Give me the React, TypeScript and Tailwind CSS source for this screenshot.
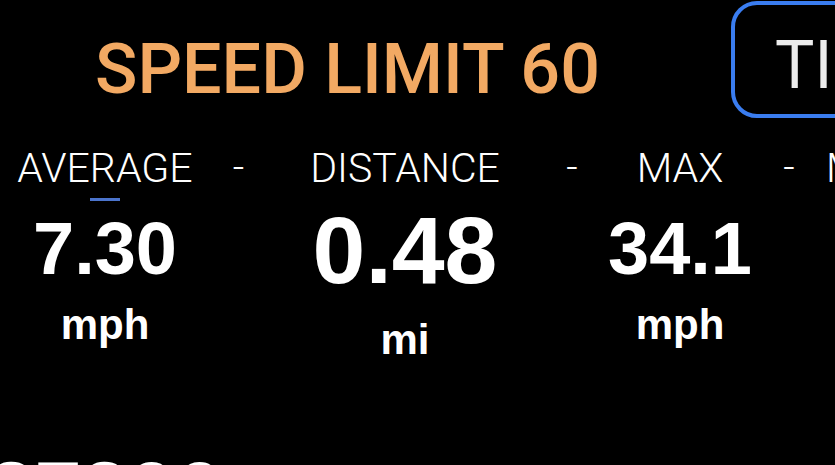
import React from "react";

const stats = [
	{ label: "AVERAGE", value: "7.30", unit: "mph", width: "w-[210px]", big: false, active: true },
	{ label: "DISTANCE", value: "0.48", unit: "mi", width: "w-[276px]", big: true, active: false },
	{ label: "MAX", value: "34.1", unit: "mph", width: "w-[158px]", big: false, active: false },
];

function Dash({ width }: { width: string }) {
	return (
		<div className={`${width} shrink-0 flex justify-center text-[40px] leading-[48px] font-light text-white`}>
			-
		</div>
	);
}

export default function App() {
	return (
		<div className="w-[835px] h-[465px] overflow-hidden bg-black text-white font-['Liberation_Sans',sans-serif]">
			<div className="flex items-start">
				<div className="pl-[95px] pt-[36px] font-['Roboto',sans-serif] font-medium text-[70px] leading-[66px] text-[#f2a963] whitespace-nowrap w-[731px] shrink-0">
					SPEED LIMIT 60
				</div>
				<div className="mt-[1px] shrink-0 w-[200px] h-[117px] border-[4px] border-[#3a7df0] rounded-[26px] pl-[40px] pt-[28px]">
					<span className="font-['Roboto',sans-serif] font-normal text-[66px] leading-[66px] text-[#ececec]">
						TIME
					</span>
				</div>
			</div>

			<div className="flex mt-[26px] font-['Roboto',sans-serif]">
				{stats.map((s, i) => (
					<React.Fragment key={s.label}>
						<div className={`${s.width} shrink-0 flex flex-col items-center`}>
							<div className="text-[41px] leading-[48px] font-light whitespace-nowrap">{s.label}</div>
							<div className={`h-[3px] w-[30px] mt-[6px] ${s.active ? "bg-[#4b74cc]" : "bg-transparent"}`} />
							{s.big ? (
								<>
									<div className="mt-[4px] font-['Liberation_Sans',sans-serif] font-bold text-[95px] leading-[90px]">
										{s.value}
									</div>
									<div className="mt-[21px] font-['Liberation_Sans',sans-serif] font-bold text-[42px] leading-[48px]">
										{s.unit}
									</div>
								</>
							) : (
								<>
									<div className="mt-[12px] font-['Liberation_Sans',sans-serif] font-bold text-[74px] leading-[72px]">
										{s.value}
									</div>
									<div className="mt-[16px] font-['Liberation_Sans',sans-serif] font-bold text-[42px] leading-[48px]">
										{s.unit}
									</div>
								</>
							)}
						</div>
						<Dash width={i === 0 ? "w-[57px]" : i === 1 ? "w-[58px]" : "w-[60px]"} />
					</React.Fragment>
				))}
				<div className="shrink-0 pl-[7px] text-[41px] leading-[48px] font-light whitespace-nowrap">MOVING</div>
			</div>

			<div className="mt-[85px] -ml-[12px] font-['Liberation_Sans',sans-serif] font-bold text-[84px] leading-[84px] whitespace-nowrap">
				27306
			</div>
		</div>
	);
}
